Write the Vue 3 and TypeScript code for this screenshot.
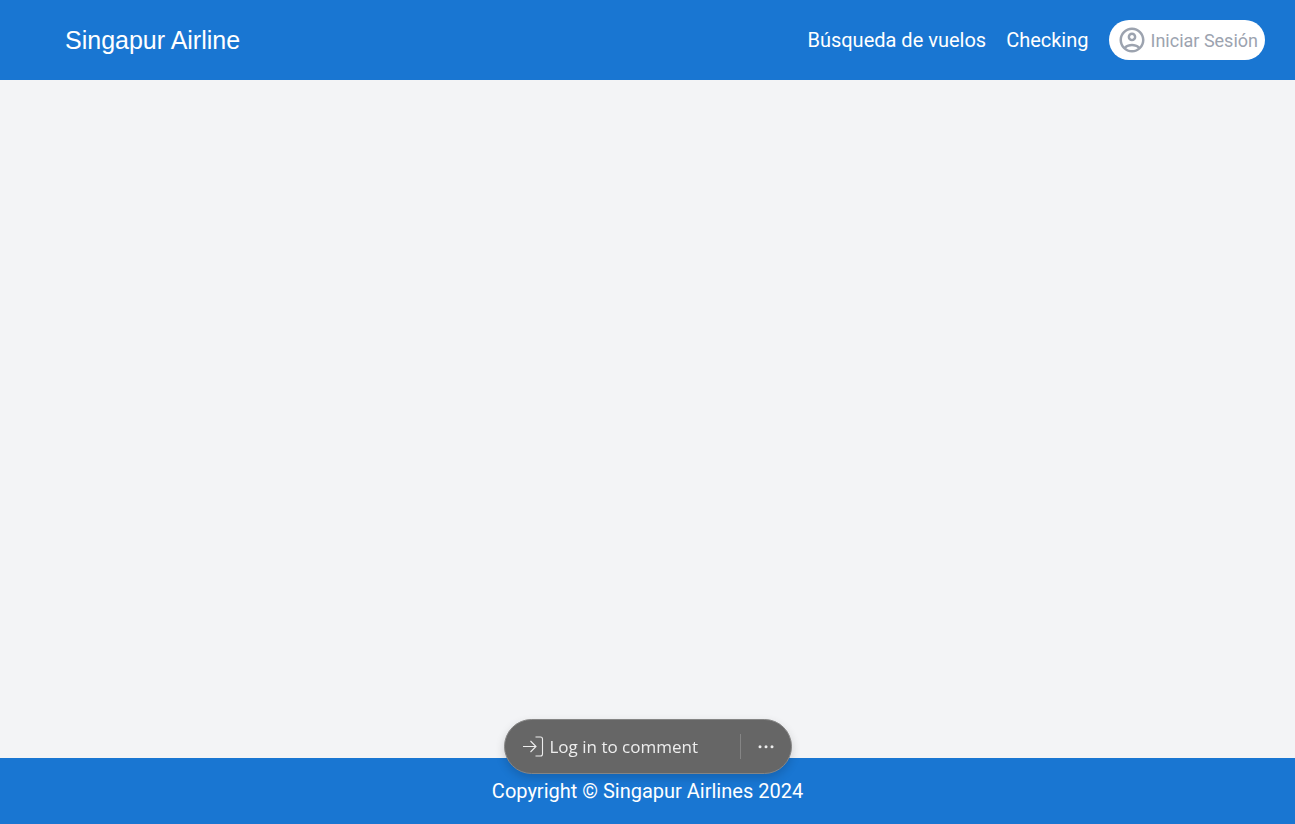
<script setup lang="ts">
interface NavLink {
  label: string
  href: string
}

const links: NavLink[] = [
  { label: 'Búsqueda de vuelos', href: '#vuelos' },
  { label: 'Checking', href: '#checking' },
]
</script>

<template>
  <div class="page">
    <header class="header">
      <a class="brand" href="#inicio">Singapur Airline</a>
      <nav class="nav">
        <a v-for="link in links" :key="link.href" class="nav-link" :href="link.href">{{ link.label }}</a>
        <button class="login" type="button">
          <svg class="login-icon" viewBox="0 0 24 24" fill="currentColor" aria-hidden="true">
            <path d="M12 2C6.48 2 2 6.48 2 12s4.48 10 10 10 10-4.48 10-10S17.52 2 12 2zM7.35 18.5C8.66 17.56 10.26 17 12 17s3.34.56 4.65 1.5c-1.31.94-2.91 1.5-4.65 1.5s-3.34-.56-4.65-1.5zm10.79-1.38C16.45 15.8 14.32 15 12 15s-4.45.8-6.14 2.12C4.7 15.73 4 13.95 4 12c0-4.42 3.58-8 8-8s8 3.58 8 8c0 1.95-.7 3.73-1.86 5.12z" />
            <path d="M12 6c-1.93 0-3.5 1.57-3.5 3.5S10.07 13 12 13s3.5-1.57 3.5-3.5S13.93 6 12 6zm0 5c-.83 0-1.5-.67-1.5-1.5S11.17 8 12 8s1.5.67 1.5 1.5S12.83 11 12 11z" />
          </svg>
          Iniciar Sesión
        </button>
      </nav>
    </header>

    <main class="content"></main>

    <footer class="footer">Copyright © Singapur Airlines 2024</footer>

    <div class="toolbar" role="toolbar" aria-label="Comments">
      <button class="comment" type="button">
        <svg class="comment-icon" viewBox="0 0 22 22" fill="none" stroke="currentColor" stroke-width="1.1" aria-hidden="true">
          <path d="M1 10.500H14M8.500 5L14 10.500L8.500 16" />
          <path d="M13.500 1H18.500Q20.500 1 20.500 3V18Q20.500 20 18.500 20H13.500" />
        </svg>
        Log in to comment
      </button>
      <button class="more" type="button" aria-label="More options">
        <svg class="more-icon" viewBox="0 0 16 4" fill="currentColor" aria-hidden="true">
          <circle cx="2" cy="1.700" r="1.500" />
          <circle cx="8" cy="1.700" r="1.500" />
          <circle cx="14" cy="1.700" r="1.500" />
        </svg>
      </button>
    </div>
  </div>
</template>

<style>
body {
  margin: 0;
}
</style>

<style scoped>
.page {
  display: flex;
  flex-direction: column;
  min-height: 100vh;
  background: #f3f4f6;
  font-family: Roboto, 'Liberation Sans', sans-serif;
}

.header {
  display: flex;
  align-items: center;
  justify-content: space-between;
  box-sizing: border-box;
  padding: 20px 30px 20px 65px;
  background: #1976d2;
}

.brand {
  color: #fff;
  font-family: 'Liberation Sans', Arial, sans-serif;
  font-size: 25px;
  line-height: 40px;
  text-decoration: none;
}

.nav {
  display: flex;
  align-items: center;
  gap: 20px;
}

.nav-link {
  color: #fff;
  font-size: 20px;
  line-height: 30px;
  text-decoration: none;
}

.login {
  display: flex;
  align-items: center;
  gap: 4px;
  height: 40px;
  padding: 0 7px 0 8px;
  border: 0;
  border-radius: 20px;
  background: #fff;
  color: #9ca3af;
  font-family: inherit;
  font-size: 18px;
  cursor: pointer;
}

.login-icon {
  width: 30px;
  height: 30px;
}

.content {
  flex: 1;
}

.footer {
  padding: 18px 20px;
  background: #1976d2;
  color: #fff;
  font-size: 20px;
  line-height: 30px;
  text-align: center;
}

.toolbar {
  position: fixed;
  bottom: 50px;
  left: 50%;
  display: flex;
  align-items: center;
  box-sizing: border-box;
  width: 288px;
  height: 55px;
  border: 1px solid #858585;
  border-radius: 28px;
  background: #666;
  box-shadow: 0 4px 10px rgba(0, 0, 0, 0.16);
  transform: translateX(-50%);
}

.comment,
.more {
  display: flex;
  align-items: center;
  border: 0;
  background: none;
  color: #ededed;
  cursor: pointer;
}

.comment {
  flex: 1;
  gap: 6px;
  height: 100%;
  padding: 0 0 0 17px;
  font-family: 'Open Sans', 'Noto Sans', sans-serif;
  font-size: 17px;
}

.comment-icon {
  width: 22px;
  height: 22px;
}

.more {
  justify-content: center;
  width: 51px;
  height: 25px;
  padding: 0;
  border-left: 1px solid #858585;
}

.more-icon {
  width: 16px;
  height: 4px;
}
</style>
